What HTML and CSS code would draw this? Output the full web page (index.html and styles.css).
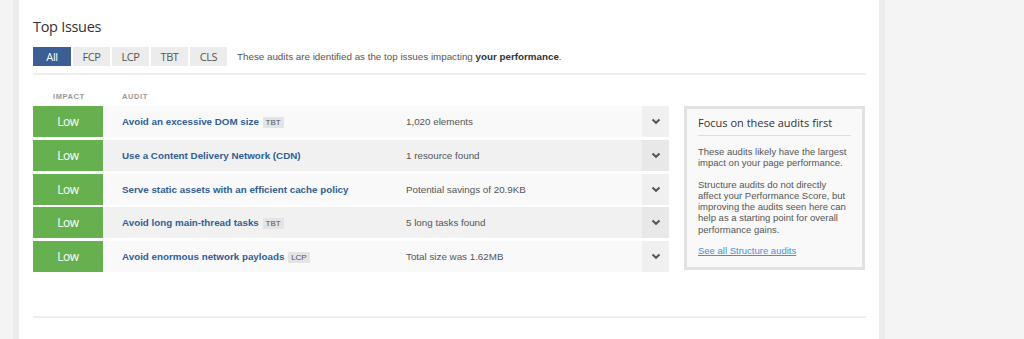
FILE: index.html
```html
<!DOCTYPE html>
<html lang="en">
<head>
<meta charset="UTF-8">
<title>Top Issues</title>
<link rel="stylesheet" href="styles.css">
</head>
<body>
<div class="page">
    <div class="panel">
        <h2 class="section-title">Top Issues</h2>

        <div class="filter-bar">
            <div class="tabs">
                <span class="tab active">All</span>
                <span class="tab">FCP</span>
                <span class="tab">LCP</span>
                <span class="tab">TBT</span>
                <span class="tab">CLS</span>
            </div>
            <p class="filter-note">These audits are identified as the top issues impacting <strong>your performance</strong>.</p>
        </div>

        <div class="issues">
            <div class="audit-table">
                <div class="table-head">
                    <span class="col-impact">Impact</span>
                    <span class="col-audit">Audit</span>
                </div>

                <div class="audit-row">
                    <span class="impact">Low</span>
                    <span class="audit-name">Avoid an excessive DOM size <span class="tag">TBT</span></span>
                    <span class="audit-info">1,020 elements</span>
                    <span class="toggle"><svg width="10" height="7" viewBox="0 0 10 7"><path d="M1.5 1.5 5 4.8 8.5 1.5" fill="none" stroke="#555" stroke-width="2"/></svg></span>
                </div>
                <div class="audit-row">
                    <span class="impact">Low</span>
                    <span class="audit-name">Use a Content Delivery Network (CDN)</span>
                    <span class="audit-info">1 resource found</span>
                    <span class="toggle"><svg width="10" height="7" viewBox="0 0 10 7"><path d="M1.5 1.5 5 4.8 8.5 1.5" fill="none" stroke="#555" stroke-width="2"/></svg></span>
                </div>
                <div class="audit-row">
                    <span class="impact">Low</span>
                    <span class="audit-name">Serve static assets with an efficient cache policy</span>
                    <span class="audit-info">Potential savings of 20.9KB</span>
                    <span class="toggle"><svg width="10" height="7" viewBox="0 0 10 7"><path d="M1.5 1.5 5 4.8 8.5 1.5" fill="none" stroke="#555" stroke-width="2"/></svg></span>
                </div>
                <div class="audit-row">
                    <span class="impact">Low</span>
                    <span class="audit-name">Avoid long main-thread tasks <span class="tag">TBT</span></span>
                    <span class="audit-info">5 long tasks found</span>
                    <span class="toggle"><svg width="10" height="7" viewBox="0 0 10 7"><path d="M1.5 1.5 5 4.8 8.5 1.5" fill="none" stroke="#555" stroke-width="2"/></svg></span>
                </div>
                <div class="audit-row">
                    <span class="impact">Low</span>
                    <span class="audit-name">Avoid enormous network payloads <span class="tag">LCP</span></span>
                    <span class="audit-info">Total size was 1.62MB</span>
                    <span class="toggle"><svg width="10" height="7" viewBox="0 0 10 7"><path d="M1.5 1.5 5 4.8 8.5 1.5" fill="none" stroke="#555" stroke-width="2"/></svg></span>
                </div>
            </div>

            <!-- Sidebar tip -->
            <div class="focus-box">
                <h3>Focus on these audits first</h3>
                <p>These audits likely have the largest impact on your page performance.</p>
                <p>Structure audits do not directly affect your Performance Score, but improving the audits seen here can help as a starting point for overall performance gains.</p>
                <a href="#">See all Structure audits</a>
            </div>
        </div>

        <div class="divider"></div>
    </div>
</div>
</body>
</html>
```

FILE: styles.css
```css
body {
    margin: 0;
    padding: 0;
    background-color: #f4f4f4;
    font-family: "Liberation Sans", Arial, sans-serif;
    color: #555;
}

.page {
    padding-left: 13px;
    height: 339px;
    overflow: hidden;
}

.panel {
    width: 833px;
    height: 100%;
    background-color: #fff;
    border-left: 6px solid #ececec;
    border-right: 6px solid #ececec;
    padding: 17px 13px 0 14px;
}

.section-title {
    margin: 0;
    font-family: "Open Sans", sans-serif;
    font-weight: 400;
    font-size: 14.5px;
    line-height: 20px;
    letter-spacing: -0.3px;
    color: #333;
}

/* Filter tabs */
.filter-bar {
    display: flex;
    align-items: center;
    margin-top: 10px;
    padding-bottom: 7px;
    border-bottom: 2px solid #eee;
}

.tabs {
    display: flex;
    gap: 2px;
}

.tab {
    width: 37px;
    height: 19px;
    line-height: 19px;
    text-align: center;
    background-color: #ececec;
    font-family: "Open Sans", sans-serif;
    font-size: 11px;
    letter-spacing: -0.4px;
    color: #555;
}

.tab.active {
    width: 38px;
    background-color: #3a5f95;
    color: #fff;
}

.filter-note {
    margin: 0 0 0 10px;
    font-size: 9.8px;
    color: #555;
}

.filter-note strong {
    color: #333;
}

/* Audit table */
.issues {
    display: flex;
    align-items: flex-start;
    gap: 15px;
}

.audit-table {
    width: 636px;
}

.table-head {
    display: flex;
    height: 31px;
    padding-top: 12px;
    box-sizing: border-box;
    font-size: 7.5px;
    line-height: 19px;
    font-weight: bold;
    text-transform: uppercase;
    letter-spacing: 0.6px;
    color: #999;
}

.col-impact {
    width: 89px;
    padding-left: 20px;
    box-sizing: border-box;
}

.audit-row {
    display: flex;
    align-items: center;
    height: 31px;
    margin-bottom: 2.75px;
    background-color: #f9f9f9;
    font-size: 9.8px;
}

.audit-row:last-child {
    margin-bottom: 0;
}

.audit-row:nth-child(odd) {
    background-color: #f1f1f1;
}

.impact {
    width: 70px;
    align-self: stretch;
    display: flex;
    align-items: center;
    justify-content: center;
    background-color: #67b050;
    color: #fff;
    font-family: "Open Sans", sans-serif;
    font-size: 12px;
    letter-spacing: -0.5px;
}

.audit-name {
    width: 284px;
    padding-left: 19px;
    font-weight: bold;
    color: #2f5f95;
}

.tag {
    display: inline-block;
    margin-left: 1px;
    padding: 0 3px;
    height: 11px;
    line-height: 11px;
    background-color: #e4e4e4;
    font-size: 8px;
    font-weight: normal;
    color: #555;
    vertical-align: 0;
}

.audit-info {
    flex: 1;
    color: #555;
}

.toggle {
    width: 27px;
    align-self: stretch;
    display: flex;
    align-items: center;
    justify-content: center;
    background-color: #f0f0f0;
}

.audit-row:nth-child(odd) .toggle {
    background-color: #e8e8e8;
}

/* Focus box */
.focus-box {
    width: 153px;
    margin-top: 31px;
    padding: 5px 11px 11px;
    background-color: #f9f9f9;
    border: 3px solid #e2e2e2;
    font-size: 9.5px;
    line-height: 11.3px;
}

.focus-box h3 {
    margin: 0 0 10px;
    padding-bottom: 3px;
    border-bottom: 1px solid #ddd;
    font-family: "Open Sans", sans-serif;
    font-weight: 400;
    font-size: 11px;
    line-height: 18px;
    color: #333;
}

.focus-box p {
    margin: 0 0 10px;
    color: #555;
}

.focus-box a {
    color: #4a8fd8;
}

.divider {
    margin-top: 44px;
    border-top: 2px solid #eee;
}
```
